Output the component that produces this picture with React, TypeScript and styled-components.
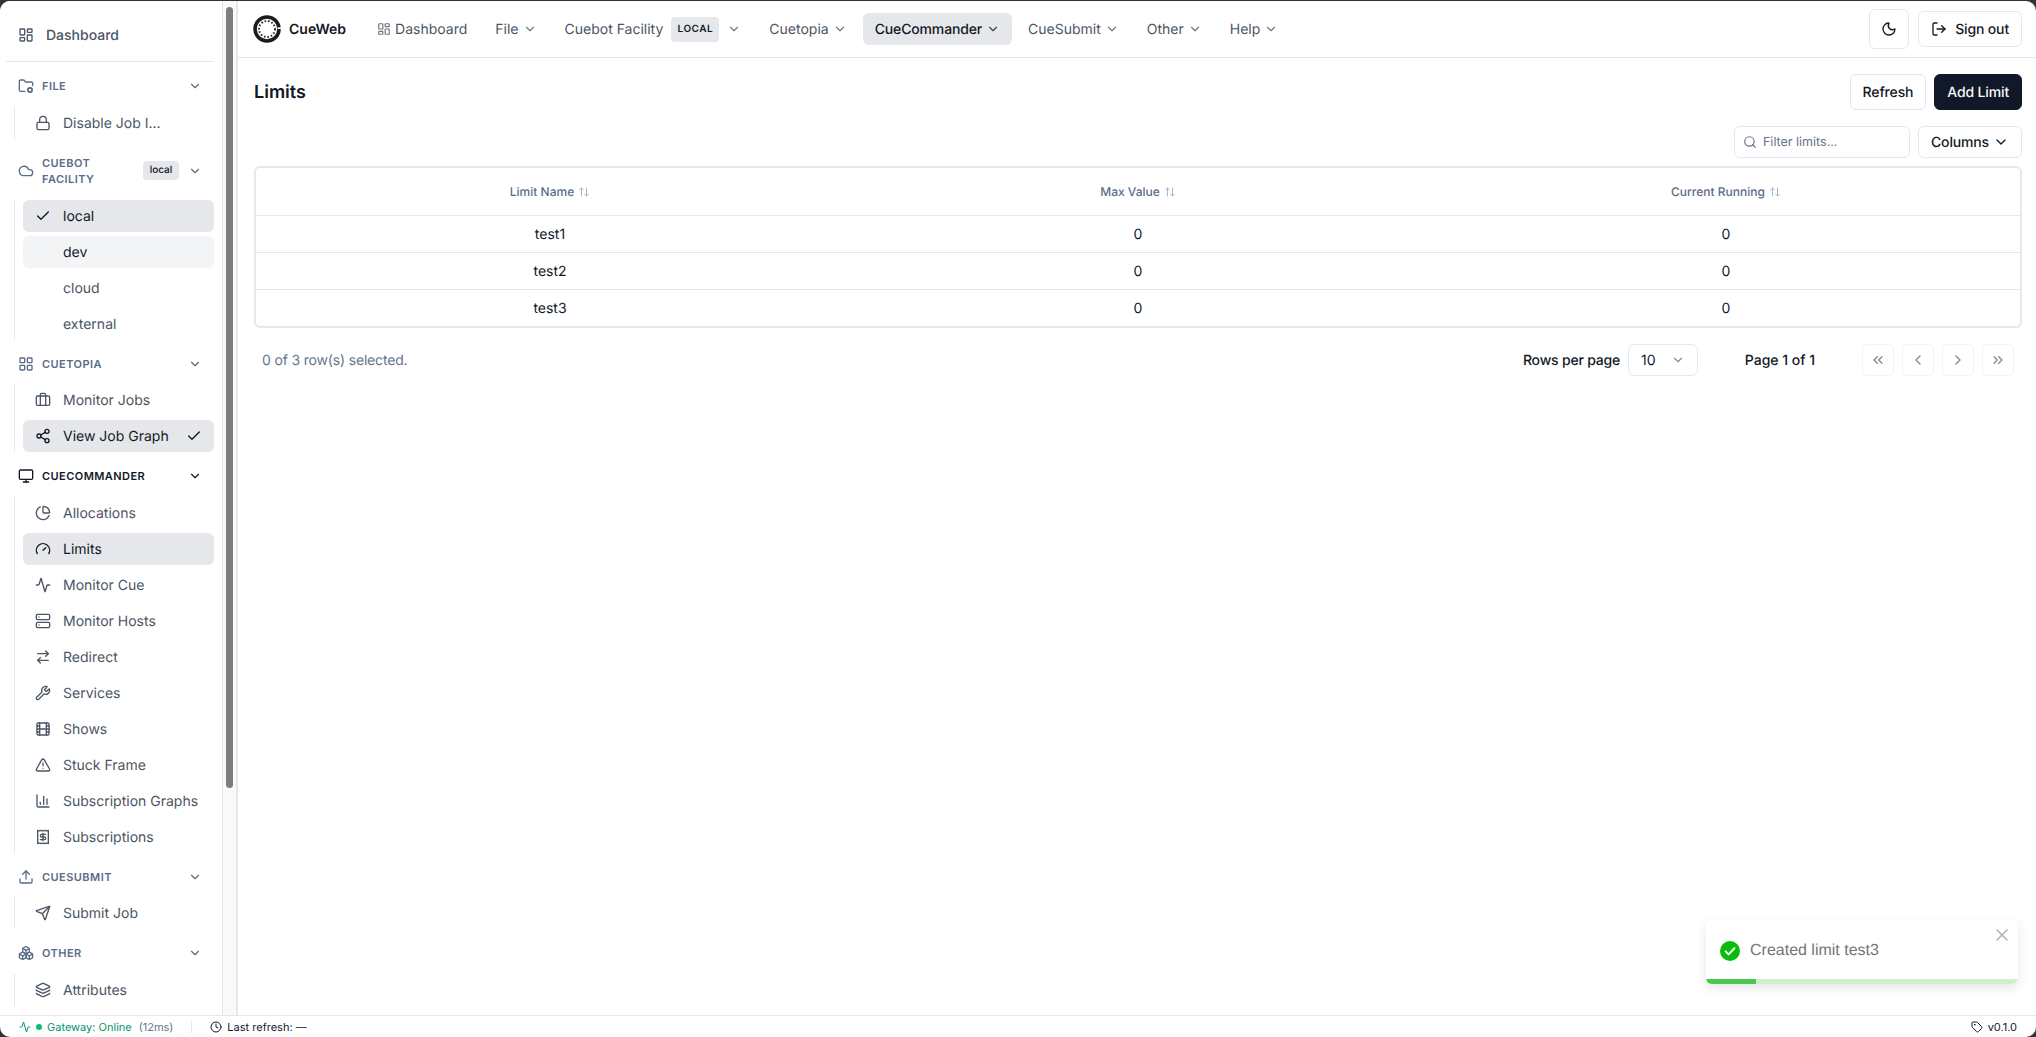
import React from 'react';
import styled, { createGlobalStyle } from 'styled-components';
import {
  LayoutDashboard, FolderCog, Lock, Cloud, Check, LayoutGrid, Briefcase, Share2, Monitor, PieChart, Gauge, Activity,
  Server, ArrowRightLeft, Wrench, Film, TriangleAlert, BarChart3, Receipt, Upload, Send, Boxes, Layers, ChevronDown,
  Moon, LogOut, Search, ArrowUpDown, ChevronsLeft, ChevronLeft, ChevronRight, ChevronsRight, X, Clock, Tag,
} from 'lucide-react';

const Global = createGlobalStyle`
  html, body { margin: 0; padding: 0; height: 100%; background: #333; }
  #root { height: 100%; }
  * { box-sizing: border-box; }
  body { font-family: Inter, "Noto Sans", sans-serif; color: #111827; text-rendering: geometricPrecision; }
`;

const Frame = styled.div`
  height: 100vh;
  padding-top: 1px;
  background: #333;
`;
const Window = styled.div`
  height: 100%;
  position: relative;
  display: flex;
  flex-direction: column;
  background: #fff;
  border-radius: 10px;
  overflow: hidden;
`;
const Body = styled.div`
  flex: 1;
  min-height: 0;
  display: flex;
`;
const Sidebar = styled.aside`
  width: 223px;
  flex: none;
  overflow: hidden;
  padding: 17px 8px 0 6px;
  background: #fff;
  border-right: 1px solid #e5e7eb;
`;
const ScrollRail = styled.div`
  width: 15px;
  flex: none;
  padding: 6px 3px 0;
  background: #f9f9f9;
  border-right: 2px solid #e5e7eb;
`;
const ScrollThumb = styled.div`
  height: 781px;
  border-radius: 4px;
  background: #7d7d7d;
`;
const SideTop = styled.a`
  display: flex;
  align-items: center;
  gap: 12px;
  height: 34px;
  padding-left: 12px;
  font-size: 14px;
  font-weight: 500;
  color: #4b5563;
  svg { width: 16px; height: 16px; }
`;
const Rule = styled.hr`
  border: 0;
  height: 1px;
  background: #e5e7eb;
  margin: 9px 0 0;
`;
const Section = styled.section`
  padding-top: 8px;
`;
const SectionHead = styled.div<{ $active?: boolean; $tall?: boolean }>`
  display: flex;
  align-items: center;
  gap: 8px;
  height: ${p => (p.$tall ? 48 : 32)}px;
  padding: 0 12px;
  margin-bottom: ${p => (p.$tall ? 5 : 4.5)}px;
  color: ${p => (p.$active ? '#111827' : '#5a6b88')};
  svg.lead { width: 16px; height: 16px; flex: none; }
  svg.chev { width: 14px; height: 14px; flex: none; margin-left: 1px; }
`;
const SectionTitle = styled.span`
  flex: 1;
  font-size: 11px;
  font-weight: 600;
  line-height: 16px;
  letter-spacing: 0.45px;
  text-transform: uppercase;
`;
const SmallBadge = styled.span`
  width: 36px;
  text-align: center;
  height: 19px;
  line-height: 19px;
  border-radius: 4px;
  background: #e5e7eb;
  color: #111827;
  font-size: 10px;
  font-weight: 500;
`;
const Items = styled.div`
  display: flex;
  flex-direction: column;
  gap: 4px;
  margin-left: 8px;
  padding-left: 8px;
  border-left: 1px solid #e5e7eb;
`;
const Item = styled.a<{ $state?: 'active' | 'hover' }>`
  display: flex;
  align-items: center;
  height: 32px;
  gap: 12px;
  padding: 0 12px;
  border-radius: 6px;
  font-size: 14px;
  font-weight: 400;
  white-space: nowrap;
  color: ${p => (p.$state ? '#111827' : '#4b5563')};
  background: ${p => (p.$state === 'active' ? '#e5e7eb' : p.$state === 'hover' ? '#f3f4f6' : 'transparent')};
  svg { width: 16px; height: 16px; flex: none; }
`;
const ItemIcon = styled.span`
  width: 16px;
  height: 16px;
  flex: none;
  display: flex;
`;
const ItemLabel = styled.span`
  flex: 1;
  padding-top: 1px;
`;
const Main = styled.main`
  flex: 1;
  min-width: 0;
  display: flex;
  flex-direction: column;
`;
const TopBar = styled.header`
  flex: none;
  height: 57px;
  display: flex;
  align-items: center;
  padding: 0 14px 0 15px;
  border-bottom: 1px solid #e5e7eb;
`;
const Brand = styled.div`
  display: flex;
  align-items: center;
  gap: 8px;
  font-size: 14px;
  font-weight: 600;
  margin-right: 19px;
`;
const NavList = styled.div`
  display: flex;
  align-items: center;
  gap: 4px;
`;
const NavItem = styled.a<{ $active?: boolean }>`
  display: flex;
  align-items: center;
  gap: 4px;
  height: 32px;
  padding: 0 12px;
  border-radius: 6px;
  font-size: 14px;
  font-weight: ${p => (p.$active ? 500 : 400)};
  letter-spacing: ${p => (p.$active ? '-0.15px' : '0')};
  color: ${p => (p.$active ? '#111827' : '#4b5563')};
  background: ${p => (p.$active ? '#e5e7eb' : 'transparent')};
  svg { width: 14px; height: 14px; flex: none; opacity: 0.8; }
`;
const NavBadge = styled.span`
  margin: 0 4px 0 4px;
  width: 48px;
  height: 25px;
  line-height: 25px;
  text-align: center;
  border-radius: 4px;
  background: #e5e7eb;
  color: #111827;
  font-size: 10px;
  font-weight: 600;
  letter-spacing: 0.5px;
`;
const Spacer = styled.div`
  flex: 1;
`;
const Button = styled.button<{ $dark?: boolean; $h?: number; $gap?: number }>`
  height: ${p => p.$h ?? 36}px;
  display: inline-flex;
  align-items: center;
  justify-content: center;
  gap: ${p => p.$gap ?? 8}px;
  padding: 0 12px;
  border-radius: 6px;
  border: 1px solid ${p => (p.$dark ? '#111827' : '#e2e8f0')};
  background: ${p => (p.$dark ? '#111827' : '#fff')};
  color: ${p => (p.$dark ? '#f9fafb' : '#111827')};
  font: 500 14px Inter, sans-serif;
  letter-spacing: -0.15px;
  text-rendering: geometricPrecision;
  svg { width: 16px; height: 16px; flex: none; }
`;
const ThemeButton = styled(Button)`
  width: 40px;
  height: 40px;
  padding: 0;
  margin-right: 9px;
`;
const Content = styled.div`
  flex: 1;
  padding: 16px 14px 0 16px;
`;
const TitleRow = styled.div`
  display: flex;
  align-items: center;
  justify-content: space-between;
  height: 36px;
`;
const Title = styled.h1`
  margin: 0;
  font-size: 18px;
  font-weight: 600;
`;
const Actions = styled.div`
  display: flex;
  gap: 8px;
`;
const Toolbar = styled.div`
  display: flex;
  justify-content: flex-end;
  gap: 8px;
  margin: 16px 0 8px;
`;
const Filter = styled.label`
  width: 176px;
  height: 32px;
  display: flex;
  align-items: center;
  gap: 6px;
  padding: 0 8px;
  border: 1px solid #e2e8f0;
  border-radius: 6px;
  color: #64748b;
  svg { width: 14px; height: 14px; flex: none; }
`;
const FilterInput = styled.input`
  border: 0;
  outline: 0;
  min-width: 0;
  flex: 1;
  padding: 0;
  font: 400 12.5px Inter, sans-serif;
  text-rendering: geometricPrecision;
  &::placeholder { color: #64748b; opacity: 1; }
`;
const TableBox = styled.div`
  border: 2px solid #e2e8f0;
  border-radius: 6px;
  overflow: hidden;
`;
const Table = styled.table`
  width: 100%;
  table-layout: fixed;
  border-collapse: collapse;
`;
const Th = styled.th`
  height: 47px;
  padding: 0;
  font-size: 12px;
  font-weight: 500;
  color: #5a6b88;
  border-bottom: 1px solid #e2e8f0;
  svg { width: 12px; height: 12px; margin-left: 4px; vertical-align: -2px; opacity: 0.5; }
`;
const Td = styled.td`
  height: 37px;
  padding: 1px 0 0;
  text-align: center;
  font-size: 14px;
  color: #111827;
  border-bottom: 1px solid #e2e8f0;
  tr:last-child & { border-bottom: 0; }
`;
const Pagination = styled.div`
  display: flex;
  align-items: center;
  margin-top: 16px;
  padding: 0 8px;
  font-size: 14px;
`;
const Selected = styled.span`
  flex: 1;
  color: #64748b;
  letter-spacing: -0.17px;
`;
const RowsLabel = styled.span`
  font-weight: 500;
  letter-spacing: -0.2px;
  margin-right: 8px;
`;
const PageSelect = styled.div`
  width: 70px;
  height: 32px;
  display: flex;
  align-items: center;
  justify-content: space-between;
  padding: 0 12px;
  border: 1px solid #e2e8f0;
  border-radius: 6px;
  svg { width: 14px; height: 14px; opacity: 0.5; }
`;
const PageInfo = styled.span`
  width: 164px;
  text-align: center;
  font-weight: 500;
`;
const PageButtons = styled.div`
  display: flex;
  gap: 8px;
`;
const PageButton = styled.button`
  width: 32px;
  height: 32px;
  padding: 0;
  display: flex;
  align-items: center;
  justify-content: center;
  border: 1px solid #e2e8f0;
  border-radius: 6px;
  background: #fff;
  opacity: 0.5;
  color: #111827;
  svg { width: 16px; height: 16px; }
`;
const Footer = styled.footer`
  flex: none;
  height: 22px;
  display: flex;
  align-items: center;
  padding: 0 19px;
  border-top: 1px solid #e5e7eb;
  font-size: 11px;
  svg { width: 12px; height: 12px; flex: none; }
`;
const FootGroup = styled.div<{ $green?: boolean }>`
  display: flex;
  align-items: center;
  gap: 5px;
  color: ${p => (p.$green ? '#059669' : '#111827')};
`;
const Dot = styled.span`
  width: 6px;
  height: 6px;
  border-radius: 50%;
  background: #10b981;
`;
const Muted = styled.span`
  color: #64748b;
  margin-left: 2px;
`;
const FootRule = styled.span`
  width: 1px;
  height: 12px;
  background: #e5e7eb;
  margin: 0 18px;
`;
const Toast = styled.div`
  position: absolute;
  right: 18px;
  bottom: 53px;
  width: 312px;
  height: 64px;
  display: flex;
  align-items: center;
  gap: 10px;
  padding: 0 14px 2px;
  border-radius: 6px;
  background: #fff;
  box-shadow: 0 4px 12px rgba(0, 0, 0, 0.1);
  overflow: hidden;
`;
const ToastText = styled.span`
  font: 400 16px "Liberation Sans", Arial, sans-serif;
  color: #757575;
`;
const ToastClose = styled.span`
  position: absolute;
  top: 5px;
  right: 6px;
  color: #b3b3b3;
  display: flex;
  svg { width: 20px; height: 20px; }
`;
const ToastTrack = styled.div`
  position: absolute;
  left: 0;
  right: 0;
  bottom: 0;
  height: 5px;
  background: #cff0cf;
`;
const ToastFill = styled.div`
  height: 100%;
  background: #4cc84c;
`;

const Logo = () => (
  <svg width="28" height="28" viewBox="0 0 28 28" fill="none">
    <circle cx="14" cy="14" r="12" stroke="#1c1c1c" strokeWidth="3.6" />
    <circle cx="14" cy="14" r="8" stroke="#333" strokeWidth="2" strokeDasharray="1.6 1.9" />
    <rect x="24.5" y="12.4" width="3.5" height="1.6" fill="#fff" />
  </svg>
);

const Dash = () => (
  <svg width="20" height="20" viewBox="0 0 20 20">
    <circle cx="10" cy="10" r="10" fill="#07bc0c" />
    <path d="M5.6 10.4 8.6 13.4 14.4 7.2" stroke="#fff" strokeWidth="2" fill="none" strokeLinecap="round" strokeLinejoin="round" />
  </svg>
);

type Row = { icon?: React.ReactNode; label: string; state?: 'active' | 'hover'; check?: boolean };
type Group = { icon: React.ReactNode; title: string; active?: boolean; tall?: boolean; badge?: string; rows: Row[] };

const groups: Group[] = [
  { icon: <FolderCog className="lead" />, title: 'File', rows: [{ icon: <Lock />, label: 'Disable Job I...' }] },
  {
    icon: <Cloud className="lead" />, title: 'Cuebot Facility', tall: true, badge: 'local',
    rows: [
      { icon: <Check />, label: 'local', state: 'active' },
      { label: 'dev', state: 'hover' },
      { label: 'cloud' },
      { label: 'external' },
    ],
  },
  {
    icon: <LayoutGrid className="lead" />, title: 'Cuetopia',
    rows: [
      { icon: <Briefcase />, label: 'Monitor Jobs' },
      { icon: <Share2 />, label: 'View Job Graph', state: 'active', check: true },
    ],
  },
  {
    icon: <Monitor className="lead" />, title: 'CueCommander', active: true,
    rows: [
      { icon: <PieChart />, label: 'Allocations' },
      { icon: <Gauge />, label: 'Limits', state: 'active' },
      { icon: <Activity />, label: 'Monitor Cue' },
      { icon: <Server />, label: 'Monitor Hosts' },
      { icon: <ArrowRightLeft />, label: 'Redirect' },
      { icon: <Wrench />, label: 'Services' },
      { icon: <Film />, label: 'Shows' },
      { icon: <TriangleAlert />, label: 'Stuck Frame' },
      { icon: <BarChart3 />, label: 'Subscription Graphs' },
      { icon: <Receipt />, label: 'Subscriptions' },
    ],
  },
  { icon: <Upload className="lead" />, title: 'CueSubmit', rows: [{ icon: <Send />, label: 'Submit Job' }] },
  { icon: <Boxes className="lead" />, title: 'Other', rows: [{ icon: <Layers />, label: 'Attributes' }] },
];

const limits = ['test1', 'test2', 'test3'];

export default function App() {
  return (
    <Frame>
      <Global />
      <Window>
        <Body>
          <Sidebar>
            <SideTop><LayoutDashboard />Dashboard</SideTop>
            <Rule />
            {groups.map(g => (
              <Section key={g.title}>
                <SectionHead $active={g.active} $tall={g.tall}>
                  {g.icon}
                  <SectionTitle>{g.title}</SectionTitle>
                  {g.badge && <SmallBadge>{g.badge}</SmallBadge>}
                  <ChevronDown className="chev" />
                </SectionHead>
                <Items>
                  {g.rows.map(r => (
                    <Item key={r.label} $state={r.state}>
                      <ItemIcon>{r.icon}</ItemIcon>
                      <ItemLabel>{r.label}</ItemLabel>
                      {r.check && <Check />}
                    </Item>
                  ))}
                </Items>
              </Section>
            ))}
          </Sidebar>
          <ScrollRail><ScrollThumb /></ScrollRail>
          <Main>
            <TopBar>
              <Brand><Logo />CueWeb</Brand>
              <NavList>
                <NavItem><LayoutDashboard />Dashboard</NavItem>
                <NavItem>File<ChevronDown /></NavItem>
                <NavItem>Cuebot Facility<NavBadge>LOCAL</NavBadge><ChevronDown /></NavItem>
                <NavItem>Cuetopia<ChevronDown /></NavItem>
                <NavItem $active>CueCommander<ChevronDown /></NavItem>
                <NavItem>CueSubmit<ChevronDown /></NavItem>
                <NavItem>Other<ChevronDown /></NavItem>
                <NavItem>Help<ChevronDown /></NavItem>
              </NavList>
              <Spacer />
              <ThemeButton><Moon /></ThemeButton>
              <Button><LogOut />Sign out</Button>
            </TopBar>
            <Content>
              <TitleRow>
                <Title>Limits</Title>
                <Actions>
                  <Button>Refresh</Button>
                  <Button $dark>Add Limit</Button>
                </Actions>
              </TitleRow>
              <Toolbar>
                <Filter><Search /><FilterInput placeholder="Filter limits..." /></Filter>
                <Button $h={32} $gap={4}>Columns<ChevronDown /></Button>
              </Toolbar>
              <TableBox>
                <Table>
                  <thead>
                    <tr>
                      <Th>Limit Name<ArrowUpDown /></Th>
                      <Th>Max Value<ArrowUpDown /></Th>
                      <Th>Current Running<ArrowUpDown /></Th>
                    </tr>
                  </thead>
                  <tbody>
                    {limits.map(l => (
                      <tr key={l}>
                        <Td>{l}</Td>
                        <Td>0</Td>
                        <Td>0</Td>
                      </tr>
                    ))}
                  </tbody>
                </Table>
              </TableBox>
              <Pagination>
                <Selected>0 of 3 row(s) selected.</Selected>
                <RowsLabel>Rows per page</RowsLabel>
                <PageSelect>10<ChevronDown /></PageSelect>
                <PageInfo>Page 1 of 1</PageInfo>
                <PageButtons>
                  <PageButton><ChevronsLeft /></PageButton>
                  <PageButton><ChevronLeft /></PageButton>
                  <PageButton><ChevronRight /></PageButton>
                  <PageButton><ChevronsRight /></PageButton>
                </PageButtons>
              </Pagination>
            </Content>
          </Main>
        </Body>
        <Footer>
          <FootGroup $green>
            <Activity /><Dot />Gateway: Online<Muted>(12ms)</Muted>
          </FootGroup>
          <FootRule />
          <FootGroup><Clock />Last refresh: —</FootGroup>
          <Spacer />
          <FootGroup><Tag />v0.1.0</FootGroup>
        </Footer>
        <Toast>
          <Dash />
          <ToastText>Created limit test3</ToastText>
          <ToastClose><X /></ToastClose>
          <ToastTrack><ToastFill style={{ width: '16%' }} /></ToastTrack>
        </Toast>
      </Window>
    </Frame>
  );
}
